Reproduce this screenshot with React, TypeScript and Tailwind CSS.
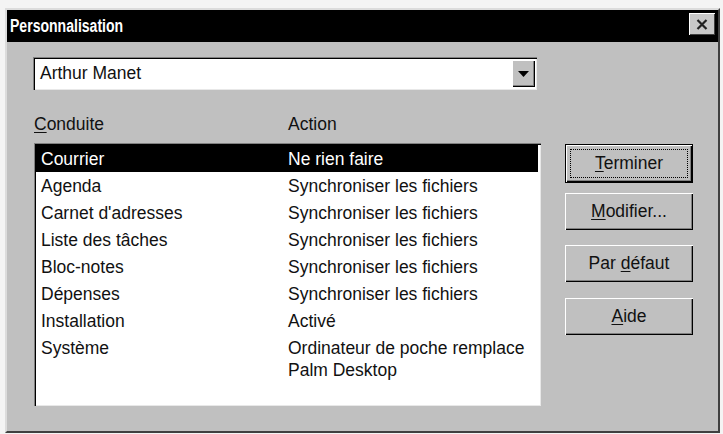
import React from "react";

const rows: [string, string, string?][] = [
  ["Courrier", "Ne rien faire"],
  ["Agenda", "Synchroniser les fichiers"],
  ["Carnet d'adresses", "Synchroniser les fichiers"],
  ["Liste des tâches", "Synchroniser les fichiers"],
  ["Bloc-notes", "Synchroniser les fichiers"],
  ["Dépenses", "Synchroniser les fichiers"],
  ["Installation", "Activé"],
  ["Système", "Ordinateur de poche remplace", "Palm Desktop"],
];

function Btn({ children, def, mt }: { children: React.ReactNode; def?: boolean; mt: string }) {
  if (def) {
    return (
      <div className={`${mt} w-[128px] h-[39px] border border-black`}>
        <div className="w-full h-full bg-[#c0c0c0] shadow-[inset_1px_1px_0_#ffffff,inset_-1px_-1px_0_#000000,inset_-2px_-2px_0_#808080] p-[4px]">
          <div className="w-full h-full border border-dotted border-black flex items-center justify-center">
            {children}
          </div>
        </div>
      </div>
    );
  }
  return (
    <div
      className={`${mt} w-[128px] h-[37px] bg-[#c0c0c0] shadow-[inset_1px_1px_0_#ffffff,inset_-1px_-1px_0_#000000,inset_-2px_-2px_0_#808080] flex items-center justify-center`}
    >
      {children}
    </div>
  );
}

export default function App() {
  return (
    <div
      className="w-[723px] h-[434px] bg-[#f4f4f4] overflow-hidden pt-[8px] pl-[5px] text-[#111] text-[17.5px]"
      style={{ fontFamily: '"Liberation Sans", Arial, sans-serif' }}
    >
      <div className="w-[715px] h-[425px] bg-[#c0c0c0] border-2 border-t-[#dcdcdc] border-l-[#dcdcdc] border-r-[#404040] border-b-[#404040] flex flex-col">
        {/* title bar */}
        <div className="h-[32px] bg-black flex items-center justify-between pl-[3px] pr-[3px]">
          <span className="text-white font-bold text-[18px] scale-x-[0.78] origin-left inline-block leading-none">
            Personnalisation
          </span>
          <div className="w-[26px] h-[22px] mb-[4px] bg-[#c8c8c8] shadow-[inset_1px_1px_0_#ffffff,inset_-1px_-1px_0_#404040] flex items-center justify-center">
            <svg width="12" height="11" viewBox="0 0 12 11">
              <path d="M1.5 1 L10.5 10 M10.5 1 L1.5 10" stroke="#222" strokeWidth="2.2" fill="none" />
            </svg>
          </div>
        </div>

        <div className="flex pl-[26px]">
          {/* left column */}
          <div className="w-[508px] pt-[15px] flex flex-col">
            <div className="w-[504px] h-[33px] bg-white shadow-[inset_1px_1px_0_#808080,inset_2px_2px_0_#000000,inset_-1px_-1px_0_#e8e8e8] flex items-center justify-between pl-[7px] pr-[2px]">
              <span className="leading-none">Arthur Manet</span>
              <div className="w-[23px] h-[27px] bg-[#c0c0c0] shadow-[inset_1px_1px_0_#ffffff,inset_-1px_-1px_0_#000000,inset_-2px_-2px_0_#808080] flex items-center justify-center">
                <svg width="11" height="6" viewBox="0 0 11 6">
                  <path d="M0 0 L11 0 L5.5 6 Z" fill="#000" />
                </svg>
              </div>
            </div>
            <div className="mt-[22px] h-[24px] flex items-center">
              <span className="ml-[1px] w-[254px]">
                <span className="underline underline-offset-2">C</span>onduite
              </span>
              <span>Action</span>
            </div>
            <div className="mt-[7px] ml-[1px] w-[507px] h-[263px] bg-white shadow-[inset_1px_1px_0_#808080,inset_2px_2px_0_#000000,inset_-1px_-1px_0_#e8e8e8] pt-[2px] pl-[2px] pr-[3px]">
              {rows.map(([a, b, c], i) => (
                <div
                  key={a}
                  className={`flex pl-[5px] pt-[3px] pb-[2px] leading-[22px] ${i === 0 ? "bg-black text-white" : ""}`}
                >
                  <span className="w-[247px]">{a}</span>
                  <span>
                    {b}
                    {c ? (
                      <>
                        <br />
                        {c}
                      </>
                    ) : null}
                  </span>
                </div>
              ))}
            </div>
          </div>

          {/* buttons */}
          <div className="ml-[24px] pt-[102px] flex flex-col">
            <Btn def mt="mt-0">
              <span>
                <span className="underline underline-offset-2">T</span>erminer
              </span>
            </Btn>
            <Btn mt="mt-[10px]">
              <span>
                <span className="underline underline-offset-2">M</span>odifier...
              </span>
            </Btn>
            <Btn mt="mt-[15px]">
              <span>
                Par <span className="underline underline-offset-2">d</span>éfaut
              </span>
            </Btn>
            <Btn mt="mt-[16px]">
              <span>
                <span className="underline underline-offset-2">A</span>ide
              </span>
            </Btn>
          </div>
        </div>
      </div>
    </div>
  );
}
